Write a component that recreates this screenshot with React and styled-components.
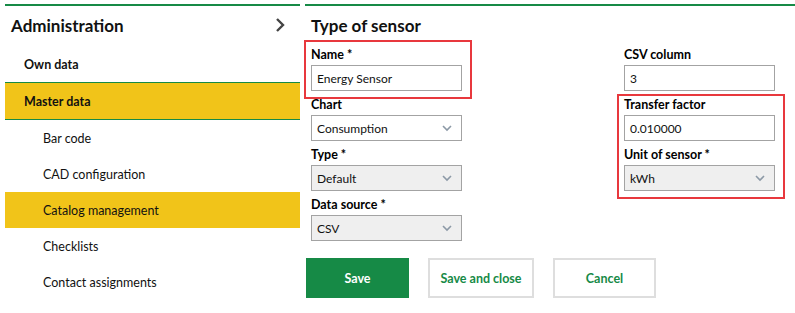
import React from "react";
import styled, { createGlobalStyle } from "styled-components";

const green = "#168a46";
const yellow = "#f1c419";

const GlobalStyle = createGlobalStyle`
  html, body {
    margin: 0;
    padding: 0;
    background: #fff;
    font-family: Lato, "Noto Sans", sans-serif;
    color: #111;
  }
`;

const Page = styled.div`
  display: flex;
  gap: 5px;
  padding: 4px 0 0 5px;
  width: 795px;
  height: 313px;
  box-sizing: border-box;
`;

const Sidebar = styled.nav`
  width: 295px;
  border-top: 2px solid ${green};
`;

const SideHeader = styled.div`
  display: flex;
  align-items: center;
  justify-content: space-between;
  height: 38px;
  padding: 0 14px 2px 6px;
  font-size: 17px;
  font-weight: 700;
`;

const MenuItem = styled.div`
  height: ${(p) => (p.$lineTop ? 38 : 36)}px;
  display: flex;
  align-items: center;
  box-sizing: border-box;
  padding-left: ${(p) => (p.$sub ? 38 : 19)}px;
  font-size: 12.5px;
  font-weight: ${(p) => (p.$bold ? 700 : 400)};
  background: ${(p) => (p.$active ? yellow : "transparent")};
  border-top: ${(p) => (p.$lineTop ? `1px solid ${green}` : "none")};
  border-bottom: ${(p) => (p.$lineTop ? `1px solid ${green}` : "none")};
  color: #111;
`;

const Main = styled.main`
  flex: 1;
  border-top: 2px solid ${green};
  padding-left: 6px;
`;

const Title = styled.h1`
  margin: 0;
  height: 35px;
  box-sizing: border-box;
  padding-top: 4px;
  display: flex;
  align-items: center;
  font-size: 17px;
  font-weight: 700;
`;

const Form = styled.div`
  display: grid;
  grid-template-columns: 151px 151px;
  column-gap: 162px;
  align-items: start;
`;

const Column = styled.div`
  display: flex;
  flex-direction: column;
`;

const Group = styled.div`
  position: relative;

  &::after {
    content: "";
    position: absolute;
    border: 2px solid #e8383d;
    top: ${(p) => p.$top}px;
    left: -7px;
    right: -10px;
    bottom: -8px;
    pointer-events: none;
  }
`;

const Field = styled.div`
  padding-top: 4px;
`;

const Label = styled.div`
  height: 20px;
  line-height: 20px;
  font-size: 12.5px;
  font-weight: 700;
  color: #000;
`;

const Box = styled.div`
  height: 26px;
  box-sizing: border-box;
  border: 1px solid #a3a3a3;
  background: ${(p) => (p.$gray ? "#efefef" : "#fff")};
  display: flex;
  align-items: center;
  justify-content: space-between;
  padding: 0 9px 0 5px;
  font-size: 12px;
  color: #111;
`;

const Buttons = styled.div`
  display: flex;
  gap: 19px;
  margin: 17px 0 0 -5px;
`;

const Button = styled.button`
  width: ${(p) => p.$w}px;
  height: 40px;
  box-sizing: border-box;
  font-family: inherit;
  font-size: 12.5px;
  font-weight: 700;
  background: ${(p) => (p.$primary ? green : "#fff")};
  color: ${(p) => (p.$primary ? "#fff" : green)};
  border: ${(p) => (p.$primary ? "none" : "2px solid #dedede")};
  padding: 0;
`;

const Chevron = () => (
  <svg width="12" height="16" viewBox="0 0 12 16">
    <polyline points="3,2 9,8 3,14" fill="none" stroke="#444" strokeWidth="2.4" />
  </svg>
);

const Caret = () => (
  <svg width="10" height="7" viewBox="0 0 10 7">
    <polyline points="1,1 5,5 9,1" fill="none" stroke="#8c99a6" strokeWidth="1.6" />
  </svg>
);

const TextField = ({ label, value }) => (
  <Field>
    <Label>{label}</Label>
    <Box>{value}</Box>
  </Field>
);

const SelectField = ({ label, value, gray }) => (
  <Field>
    <Label>{label}</Label>
    <Box $gray={gray}>
      <span>{value}</span>
      <Caret />
    </Box>
  </Field>
);

export default function App() {
  return (
    <>
      <GlobalStyle />
      <Page>
        <Sidebar>
          <SideHeader>
            Administration
            <Chevron />
          </SideHeader>
          <MenuItem $bold>Own data</MenuItem>
          <MenuItem $bold $active $lineTop>Master data</MenuItem>
          <MenuItem $sub>Bar code</MenuItem>
          <MenuItem $sub>CAD configuration</MenuItem>
          <MenuItem $sub $active>Catalog management</MenuItem>
          <MenuItem $sub>Checklists</MenuItem>
          <MenuItem $sub>Contact assignments</MenuItem>
        </Sidebar>
        <Main>
          <Title>Type of sensor</Title>
          <Form>
            <Column>
              <Group $top={-1}>
                <TextField label="Name *" value="Energy Sensor" />
              </Group>
              <SelectField label="Chart" value="Consumption" />
              <SelectField label="Type *" value="Default" gray />
              <SelectField label="Data source *" value="CSV" gray />
            </Column>
            <Column>
              <TextField label="CSV column" value="3" />
              <Group $top={3}>
                <TextField label="Transfer factor" value="0.010000" />
                <SelectField label="Unit of sensor *" value="kWh" gray />
              </Group>
            </Column>
          </Form>
          <Buttons>
            <Button $primary $w={103}>Save</Button>
            <Button $w={106}>Save and close</Button>
            <Button $w={103}>Cancel</Button>
          </Buttons>
        </Main>
      </Page>
    </>
  );
}
